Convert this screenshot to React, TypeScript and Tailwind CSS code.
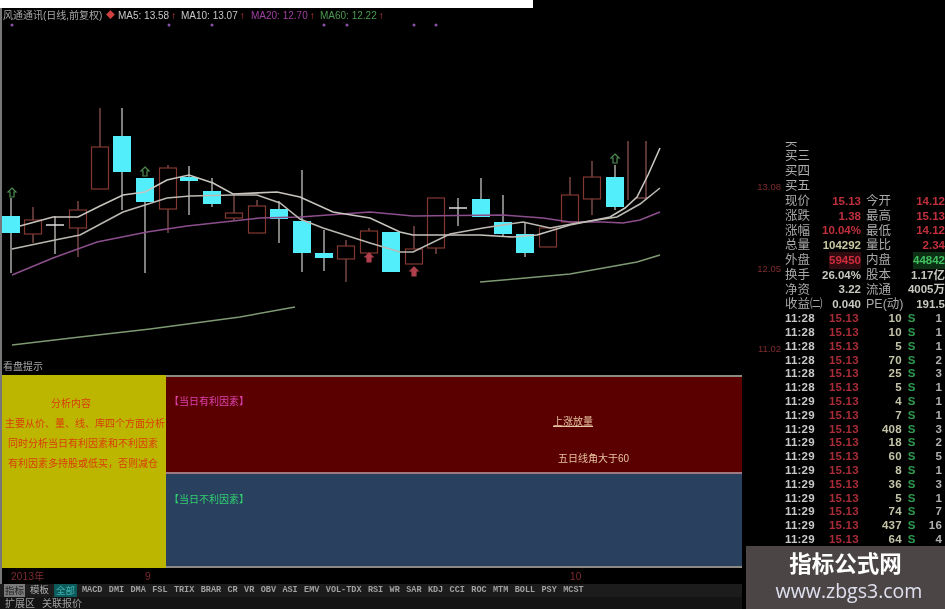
const red = '#82382f';
const wickGray = '#c4c4c0';
const cyan = '#52eefc';

// x, bodyTop, bodyBottom, wickTop, wickBottom, kind
type Candle = [number, number, number, number, number, 'c' | 'r' | 'f'];

const candles: Candle[] = [
  [11, 216, 233, 198, 273, 'c'],
  [33, 220, 234, 207, 243, 'r'],
  [55, 225, 226, 216, 254, 'f'],
  [78, 210, 228, 201, 257, 'r'],
  [100, 147, 189, 108, 189, 'r'],
  [122, 136, 172, 108, 210, 'c'],
  [145, 178, 202, 178, 273, 'c'],
  [168, 168, 209, 165, 233, 'r'],
  [189, 177, 181, 166, 215, 'c'],
  [212, 191, 204, 178, 207, 'c'],
  [234, 213, 218, 193, 221, 'r'],
  [257, 206, 233, 200, 233, 'r'],
  [279, 209, 219, 201, 243, 'c'],
  [302, 221, 253, 170, 272, 'c'],
  [324, 253, 258, 230, 271, 'c'],
  [346, 246, 259, 240, 282, 'r'],
  [369, 231, 253, 228, 253, 'r'],
  [391, 232, 272, 232, 272, 'c'],
  [414, 249, 264, 226, 264, 'r'],
  [436, 198, 248, 198, 254, 'r'],
  [458, 208, 209, 198, 226, 'f'],
  [481, 199, 217, 178, 217, 'c'],
  [503, 222, 234, 195, 237, 'c'],
  [525, 234, 253, 222, 257, 'c'],
  [548, 228, 247, 228, 247, 'r'],
  [570, 195, 222, 177, 222, 'r'],
  [592, 177, 199, 161, 215, 'r'],
  [615, 177, 207, 165, 210, 'c'],
];

const ma5 = '20,226 53,217 78,217 100,206 123,195 145,192 167,180 189,175 213,183 233,194 277,192 300,197 333,212 370,218 400,232 413,235 480,235 513,237 537,235 570,225 610,217 625,208 637,197 648,175 660,148';
const ma10 = '12,249 55,240 80,235 123,212 145,205 167,198 190,196 233,195 257,195 280,203 300,219 323,228 370,243 400,252 413,252 450,234 483,228 523,222 550,228 577,223 617,217 640,204 660,188';
const ma20 = '12,275 53,258 97,242 147,232 187,226 260,218 300,217 370,212 413,216 503,215 543,218 570,222 603,222 623,223 640,220 660,212';
const ma60a = '12,345 80,337 150,329 240,317 295,307';
const ma60b = '480,282 570,274 637,262 660,255';

const dots = [12, 169, 212, 324, 347, 414, 436];

const quotes = [
  ['现价', '15.13', 'text-[#c0303c]', '今开', '14.12', 'text-[#c0303c]'],
  ['涨跌', '1.38', 'text-[#c0303c]', '最高', '15.13', 'text-[#c0303c]'],
  ['涨幅', '10.04%', 'text-[#c0303c]', '最低', '14.12', 'text-[#c0303c]'],
  ['总量', '104292', 'text-[#c8c8a0]', '量比', '2.34', 'text-[#c0303c]'],
  ['外盘', '59450', 'text-[#d02c3c] bg-[#300c10]', '内盘', '44842', 'text-[#40c060] bg-[#0c3014]'],
  ['换手', '26.04%', 'text-[#c8c8c0]', '股本', '1.17亿', 'text-[#c8c8c0]'],
  ['净资', '3.22', 'text-[#c8c8c0]', '流通', '4005万', 'text-[#c8c8c0]'],
  ['收益㈡', '0.040', 'text-[#c8c8c0]', 'PE(动)', '191.5', 'text-[#c8c8c0]'],
];

const trades = [
  ['11:28', '10', '1'],
  ['11:28', '10', '1'],
  ['11:28', '5', '1'],
  ['11:28', '70', '2'],
  ['11:28', '25', '3'],
  ['11:28', '5', '1'],
  ['11:29', '4', '1'],
  ['11:29', '7', '1'],
  ['11:29', '408', '3'],
  ['11:29', '18', '2'],
  ['11:29', '60', '5'],
  ['11:29', '8', '1'],
  ['11:29', '36', '3'],
  ['11:29', '5', '1'],
  ['11:29', '74', '7'],
  ['11:29', '437', '16'],
  ['11:29', '64', '4'],
];

const tabs = ['MACD', 'DMI', 'DMA', 'FSL', 'TRIX', 'BRAR', 'CR', 'VR', 'OBV', 'ASI', 'EMV', 'VOL-TDX', 'RSI', 'WR', 'SAR', 'KDJ', 'CCI', 'ROC', 'MTM', 'BOLL', 'PSY', 'MCST'];

function UpArrow({ x, y, color, filled }: { x: number; y: number; color: string; filled?: boolean }) {
  return (
    <path
      d={`M${x} ${y - 5} L${x + 4} ${y - 1} L${x + 2} ${y - 1} L${x + 2} ${y + 4} L${x - 2} ${y + 4} L${x - 2} ${y - 1} L${x - 4} ${y - 1} Z`}
      fill={filled ? color : 'none'}
      stroke={color}
      strokeWidth="1.2"
    />
  );
}

function Chart() {
  return (
    <svg width="740" height="336" viewBox="2 22 740 336" className="block">
      {dots.map((x) => (
        <circle key={x} cx={x} cy={25} r="1.5" fill="#8a50a8" />
      ))}
      {candles.map(([x, top, bottom, wickTop, wickBottom, kind]) => {
        const isRed = kind === 'r';
        return (
          <g key={x}>
            <line x1={x} x2={x} y1={wickTop} y2={wickBottom} stroke={isRed ? '#8a5450' : wickGray} strokeWidth="1.3" />
            {kind === 'c' && <rect x={x - 9} y={top} width="18" height={bottom - top} fill={cyan} />}
            {kind === 'r' && <rect x={x - 8.5} y={top} width="17" height={bottom - top} fill="#000" stroke={red} strokeWidth="1.2" />}
            {kind === 'f' && <line x1={x - 9} x2={x + 9} y1={top} y2={top} stroke="#e0e0e0" strokeWidth="1.5" />}
          </g>
        );
      })}
      <line x1="628" x2="628" y1="141" y2="200" stroke="#8a5450" strokeWidth="1.3" />
      <line x1="646" x2="646" y1="141" y2="200" stroke="#8a5450" strokeWidth="1.3" />
      <line x1="636" x2="648" y1="198" y2="198" stroke="#8a5450" strokeWidth="1.3" />
      <polyline points={ma20} fill="none" stroke="#8c4e8c" strokeWidth="1.5" />
      <polyline points={ma5} fill="none" stroke="#c8c4be" strokeWidth="1.6" />
      <polyline points={ma10} fill="none" stroke="#bcb8b2" strokeWidth="1.6" />
      <polyline points={ma60a} fill="none" stroke="#7e9a72" strokeWidth="1.5" />
      <polyline points={ma60b} fill="none" stroke="#7e9a72" strokeWidth="1.5" />
      <UpArrow x={12} y={193} color="#4f8a50" />
      <UpArrow x={145} y={172} color="#4f8a50" />
      <UpArrow x={615} y={159} color="#4f8a50" />
      <UpArrow x={369} y={258} color="#b0404c" filled />
      <UpArrow x={414} y={272} color="#b0404c" filled />
    </svg>
  );
}

function MaLabel({ text, color, width }: { text: string; color: string; width: string }) {
  return (
    <span className={`flex items-center ${width} ${color}`}>
      {text}
      <span className="ml-[2px] text-[#d04040]">↑</span>
    </span>
  );
}

function Panel() {
  return (
    <div className="flex h-[193px] border-y-2 border-[#8d8a84]">
      <div className="w-[164px] shrink-0 bg-[#bdb600] -mt-[2px] -mb-[2px] flex flex-col items-start pt-[19px] text-[10px] leading-[20px] text-[#d83c08] whitespace-nowrap">
        <div className="ml-[49px]">分析内容</div>
        <div className="ml-[3px]">主要从价、量、线、库四个方面分析</div>
        <div className="ml-[6px]">同时分析当日有利因素和不利因素</div>
        <div className="ml-[6px]">有利因素多持股或低买，否则减仓</div>
      </div>
      <div className="flex-1 flex flex-col">
        <div className="h-[97px] bg-[#5a0000] border-b-2 border-[#a07880] pl-[3px] pt-[18px] text-[10px] leading-[14px] text-[#e8c4a0]">
          <div className="text-[#e040b0]">【当日有利因素】</div>
          <div className="ml-[384px] mt-[6px] w-fit underline">上涨放量</div>
          <div className="ml-[389px] mt-[23px]">五日线角大于60</div>
        </div>
        <div className="flex-1 bg-[#29405f] pl-[3px] pt-[19px] text-[10px] leading-[14px] text-[#30d070]">【当日不利因素】</div>
      </div>
    </div>
  );
}

export default function App() {
  return (
    <div className="relative w-[945px] h-[609px] overflow-hidden bg-black blur-[0.4px] font-['Liberation_Sans','Noto_Sans_CJK_SC',sans-serif]">
      <div className="w-[533px] h-2 bg-white" />
      <div className="flex h-[601px]">
        <div className="w-[742px] shrink-0 flex flex-col border-l-2 border-[#77777a]">
          <div className="h-[14px] pt-[1px] flex items-center text-[10px] text-[#b8b8b8] whitespace-nowrap">
            <span className="w-[104px] pl-[1px] text-[#a8a8a8]">风通通讯(日线,前复权)</span>
            <span className="w-[12px] text-[#d04040] text-[9px]">◆</span>
            <MaLabel text="MA5: 13.58" color="text-[#c8c8c8]" width="w-[63px]" />
            <MaLabel text="MA10: 13.07" color="text-[#c8c8c8]" width="w-[70px]" />
            <MaLabel text="MA20: 12.70" color="text-[#a040a0]" width="w-[69px]" />
            <MaLabel text="MA60: 12.22" color="text-[#4c9a50]" width="w-[70px]" />
          </div>
          <Chart />
          <div className="h-[17px] flex items-center pl-[1px] text-[10px] text-[#a8a8a8]">看盘提示</div>
          <Panel />
          <div className="h-[16px] flex items-center text-[10px] text-[#7e2c30] tracking-wide">
            <span className="ml-[9px] w-[134px]">2013年</span>
            <span className="w-[425px]">9</span>
            <span>10</span>
          </div>
          <div className="h-[13px] bg-[#1c1c1c] flex items-center text-[9.5px] text-[#b0b0b0] -ml-[2px] pl-[4px] whitespace-nowrap">
            <span className="w-[21px] h-full bg-[#7a7a7a] text-[#222] text-center">指标</span>
            <span className="ml-[4px] w-[21px] text-center">模板</span>
            <span className="ml-[4px] w-[23px] h-full bg-[#0d5a5a] text-[#40b0b0] text-center">全部</span>
            <span className="flex gap-[6.4px] ml-[5px] font-['Liberation_Mono',monospace] font-bold text-[8.5px] text-[#a0a0a0]">
              {tabs.map((t) => (
                <span key={t}>{t}</span>
              ))}
            </span>
          </div>
          <div className="h-[12px] bg-[#141414] flex items-center gap-[7px] -ml-[2px] pl-[5px] text-[10px] text-[#a0a0a0]">
            <span>扩展区</span>
            <span>关联报价</span>
          </div>
        </div>

        <div className="w-[41px] shrink-0 flex flex-col items-end pr-[2px] text-[9.5px] leading-[12px] text-[#7e2c30]">
          <div className="mt-[173px]">13.08</div>
          <div className="mt-[70px]">12.05</div>
          <div className="mt-[68px]">11.02</div>
        </div>

        <div className="flex-1 pt-[134px] pl-[2px] text-[11.5px] font-bold whitespace-nowrap">
          <div className="h-[7px] overflow-hidden flex items-end text-[12.5px] font-normal leading-[14px] text-[#b0b0b0]">买一</div>
          {['买三', '买四', '买五'].map((l) => (
            <div key={l} className="h-[15px] last:h-[14px] flex items-center text-[12.5px] font-normal text-[#b0b0b0]">{l}</div>
          ))}
          {quotes.map(([l1, v1, c1, l2, v2, c2]) => (
            <div key={l1} className="h-[14.75px] flex items-center">
              <span className="w-[40px] shrink-0 text-[12.5px] font-normal text-[#a8a8a8]">{l1}</span>
              <span className="w-[36px] flex justify-end">
                <span className={c1}>{v1}</span>
              </span>
              <span className="w-[5px]" />
              <span className="w-[36px] shrink-0 text-[12.5px] font-normal text-[#a8a8a8]">{l2}</span>
              <span className="flex-1 flex justify-end">
                <span className={c2}>{v2}</span>
              </span>
            </div>
          ))}
          {trades.map(([time, vol, n], i) => (
            <div key={i} className="h-[13.8px] flex items-center tracking-[0.2px]">
              <span className="w-[44px] text-[#c8c8c8]">{time}</span>
              <span className="text-[#a82c38]">15.13</span>
              <span className="w-[43px] text-right text-[#c4c4a8]">{vol}</span>
              <span className="ml-[6px] w-[10px] text-[#2e9a4e]">S</span>
              <span className="flex-1 text-right text-[#b0b0b0] pr-[3px]">{n}</span>
            </div>
          ))}
        </div>
      </div>

      <div className="absolute left-[746px] top-[546px] w-[199px] h-[63px] bg-[#4b4645] flex flex-col items-center pt-[5px]">
        <div className="text-[22.5px] leading-[28px] font-bold text-white">指标公式网</div>
        <div className="ml-[7px] text-[19.5px] leading-[24px] text-[#e0e0f0] font-['Open_Sans',sans-serif]">www.zbgs3.com</div>
      </div>
    </div>
  );
}
